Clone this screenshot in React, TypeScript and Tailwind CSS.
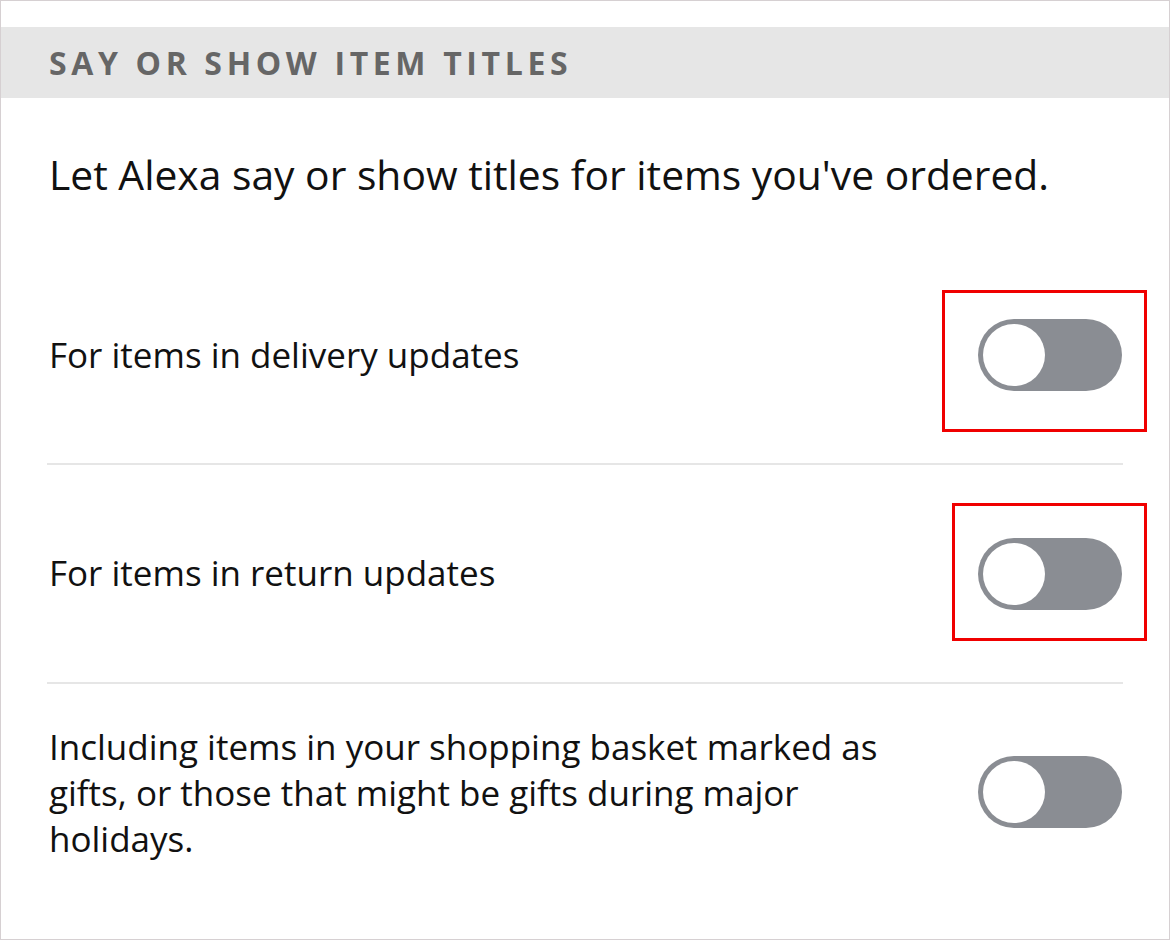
const Toggle = () => (
  <div className="relative h-[72px] w-[144px] shrink-0 rounded-full bg-[#8a8d93]">
    <div className="absolute left-[5px] top-[5px] h-[62px] w-[62px] rounded-full bg-white" />
  </div>
);

const Highlight = ({ className }: { className: string }) => (
  <div className={`pointer-events-none absolute border-[3px] border-[#f00000] ${className}`} />
);

export default function App() {
  return (
    <div
      className="h-[940px] w-[1170px] overflow-hidden border border-[#d6d0d2] bg-white text-[#111]"
      style={{ fontFamily: '"Open Sans", "Noto Sans", sans-serif' }}
    >
      <div className="mt-[26px] flex h-[71px] items-center bg-[#e6e6e6] pl-[48px]">
        <span className="text-[32px] font-bold uppercase tracking-[0.145em] text-[#666]">
          Say or show item titles
        </span>
      </div>

      <p className="mb-[49px] pl-[48px] pt-[52px] text-[40.8px] leading-[48px]">
        Let Alexa say or show titles for items you've ordered.
      </p>

      <div className="mx-[46px] flex h-[218px] items-center justify-between border-b-2 border-[#e6e6e6]">
        <span className="pl-[2px] text-[35px]">For items in delivery updates</span>
        <div className="relative mr-[1px]">
          <Toggle />
          <Highlight className="-left-[36px] -top-[29px] -right-[25px] -bottom-[41px]" />
        </div>
      </div>

      <div className="mx-[46px] flex h-[219px] items-center justify-between border-b-2 border-[#e6e6e6]">
        <span className="pl-[2px] text-[35px]">For items in return updates</span>
        <div className="relative mr-[1px]">
          <Toggle />
          <Highlight className="-left-[26px] -top-[35px] -right-[25px] -bottom-[31px]" />
        </div>
      </div>

      <div className="mx-[46px] flex items-start justify-between pt-[40px]">
        <p className="pl-[2px] text-[35px] leading-[46px]">
          Including items in your shopping basket marked as
          <br />
          gifts, or those that might be gifts during major
          <br />
          holidays.
        </p>
        <div className="mr-[1px] mt-[32px]">
          <Toggle />
        </div>
      </div>
    </div>
  );
}
